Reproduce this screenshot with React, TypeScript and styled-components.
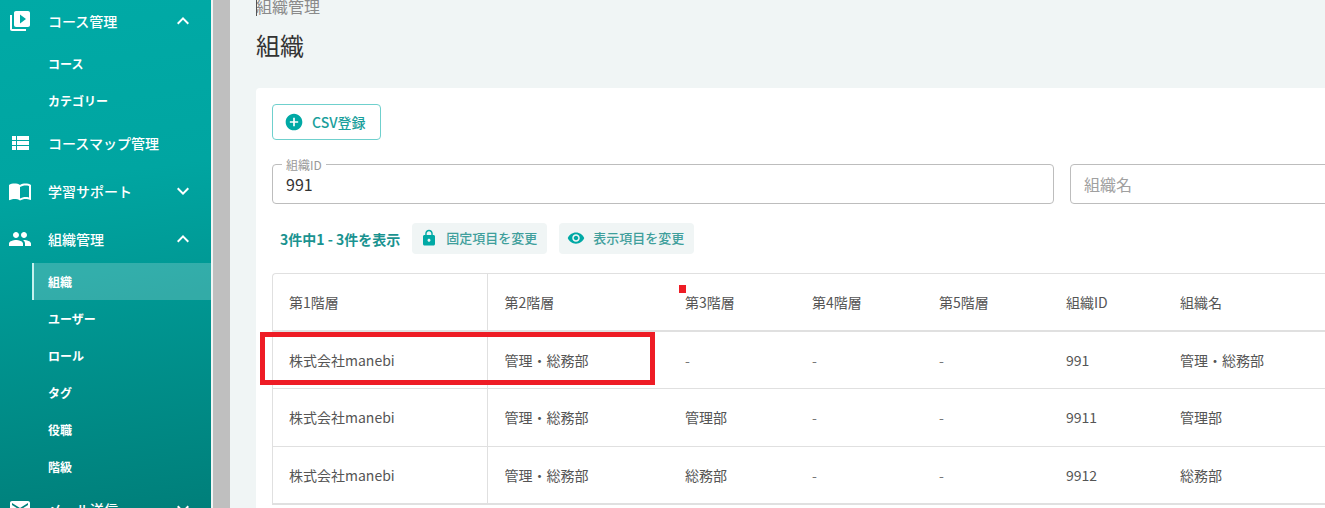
import React from 'react';
import styled, { createGlobalStyle } from 'styled-components';
import {
  MdAddCircle,
  MdEmail,
  MdExpandLess,
  MdExpandMore,
  MdImportContacts,
  MdLock,
  MdPeople,
  MdVisibility,
  MdVideoLibrary,
} from 'react-icons/md';

const GlobalStyle = createGlobalStyle`
  html, body {
    margin: 0;
    height: 100%;
    overflow: hidden;
  }
  body {
    font-family: "Noto Sans CJK JP", "Noto Sans", sans-serif;
    color: #333;
  }
`;

const Page = styled.div`
  display: flex;
  width: 1325px;
  height: 508px;
  overflow: hidden;
  background: #f0f5f5;
`;

const Sidebar = styled.nav`
  flex: 0 0 211px;
  height: 508px;
  overflow: hidden;
  background: linear-gradient(172deg, #00aaa6 0%, #00a5a1 35%, #007f7a 100%);
  color: #fff;
`;

const SideList = styled.div`
  margin-top: -3px;
  display: flex;
  flex-direction: column;
`;

const GroupRow = styled.div`
  flex: 0 0 48px;
  height: 48px;
  display: flex;
  align-items: center;
  padding: 0 20px 0 8px;
  font-size: 14px;
  font-weight: 500;
`;

const GroupIcon = styled.span`
  flex: 0 0 24px;
  width: 24px;
  height: 24px;
  font-size: 24px;
  display: flex;
  align-items: center;
  justify-content: center;
  margin-right: 16px;
`;

const GroupLabel = styled.span`
  flex: 1;
`;

const Chevron = styled.span`
  display: flex;
  font-size: 24px;
  margin-right: -4px;
`;

const SubRow = styled.div<{ $active?: boolean }>`
  height: 37px;
  margin-left: 32px;
  padding-left: ${(p) => (p.$active ? '14px' : '16px')};
  display: flex;
  align-items: center;
  font-size: 12px;
  font-weight: 700;
  box-sizing: border-box;
  border-left: ${(p) => (p.$active ? '2px solid #c6f1ee' : 'none')};
  background: ${(p) => (p.$active ? 'rgba(255, 255, 255, 0.2)' : 'transparent')};
`;

const Gutter = styled.div`
  flex: 0 0 17px;
  margin-left: 2px;
  background: #bfbfbf;
`;

const Main = styled.main`
  flex: 1;
  min-width: 0;
  position: relative;
  padding: 0 0 0 26px;
  overflow: hidden;
`;

const Crumb = styled.div`
  height: 14px;
  margin-top: -4px;
  font-size: 16px;
  line-height: 20px;
  color: #8a8a8a;
  width: 70px;
  position: relative;
`;

const Caret = styled.span`
  position: absolute;
  left: 0;
  top: 0;
  width: 1px;
  height: 20px;
  background: #555;
`;

const Title = styled.h1`
  margin: 17px 0 0;
  height: 61px;
  font-size: 24px;
  font-weight: 400;
  line-height: 36px;
  color: #333;
`;

const Card = styled.section`
  width: 1200px;
  padding: 16px;
  background: #fff;
  border-radius: 4px;
  box-sizing: border-box;
  height: 500px;
`;

const OutlineButton = styled.button`
  display: flex;
  align-items: center;
  gap: 8px;
  width: 109px;
  height: 36px;
  padding: 0 0 0 11px;
  background: #fff;
  border: 1px solid #6fd0cd;
  border-radius: 4px;
  box-sizing: border-box;
  color: #1a9f9c;
  font: 500 14px "Noto Sans CJK JP", sans-serif;
  svg {
    font-size: 20px;
    color: #00a9a5;
  }
`;

const Fields = styled.div`
  display: flex;
  gap: 16px;
  margin-top: 24px;
`;

const Field = styled.div<{ $width: number }>`
  position: relative;
  flex: 0 0 ${(p) => p.$width}px;
  height: 40px;
  box-sizing: border-box;
  padding: 0 13px;
  display: flex;
  align-items: center;
  border: 1px solid #bdbdbd;
  border-radius: 4px;
  font-size: 16px;
  color: #333;
`;

const FieldLegend = styled.span`
  position: absolute;
  left: 9px;
  top: -7px;
  padding: 0 4px;
  background: #fff;
  font-size: 12px;
  line-height: 13px;
  color: #9a9a9a;
`;

const Placeholder = styled.span`
  color: #a0a0a0;
  font-size: 16px;
`;

const Toolbar = styled.div`
  display: flex;
  align-items: center;
  margin-top: 19px;
  height: 31px;
`;

const ResultCount = styled.span`
  margin: 0 12px 0 8px;
  font-size: 14px;
  font-weight: 700;
  color: #1a9390;
`;

const SoftButton = styled.button`
  display: flex;
  align-items: center;
  gap: 7px;
  width: 135px;
  height: 31px;
  margin-right: 12px;
  padding: 0 0 2px 8px;
  border: none;
  border-radius: 4px;
  background: #f0f5f5;
  color: #3f9f9c;
  font: 500 13px "Noto Sans CJK JP", sans-serif;
  svg {
    font-size: 18px;
    color: #00a9a5;
    margin-right: 1px;
  }
`;

const TableBox = styled.div`
  margin-top: 19px;
  border: 1px solid #e0e0e0;
  border-right: none;
  border-radius: 4px 0 0 0;
`;

const Table = styled.table`
  border-collapse: collapse;
  table-layout: fixed;
  width: 1100px;
  font-size: 14px;
  color: #555;

  th:nth-child(2),
  td:nth-child(2) {
    padding-left: 17px;
  }
`;

const HeadCell = styled.th<{ $divider?: boolean }>`
  height: 57px;
  padding: 0 16px;
  text-align: left;
  font-weight: 400;
  box-sizing: border-box;
  border-bottom: 2px solid #e0e0e0;
  border-right: ${(p) => (p.$divider ? '1px solid #e0e0e0' : 'none')};
`;

const BodyCell = styled.td<{ $divider?: boolean; $muted?: boolean; $height: number }>`
  height: ${(p) => p.$height}px;
  padding: 0 16px;
  box-sizing: border-box;
  border-bottom: 1px solid #e0e0e0;
  border-right: ${(p) => (p.$divider ? '1px solid #e0e0e0' : 'none')};
  color: ${(p) => (p.$muted ? '#777' : '#555')};
`;

const RedFrame = styled.div`
  position: absolute;
  left: 30px;
  top: 332px;
  width: 395px;
  height: 53px;
  box-sizing: border-box;
  border: 5px solid #ee1c25;
  pointer-events: none;
`;

const RedDot = styled.div`
  position: absolute;
  left: 449px;
  top: 285px;
  width: 7px;
  height: 8px;
  background: #ee1c25;
`;

const ListIcon: React.FC = () => (
  <svg width="24" height="24" viewBox="0 0 24 24" fill="currentColor" aria-hidden="true">
    <path d="M4 14h4v-4H4v4zm0 5h4v-4H4v4zM4 9h4V5H4v4zm5 5h12v-4H9v4zm0 5h12v-4H9v4zM9 5v4h12V5H9z" />
  </svg>
);

const columns = [214, 182, 127, 127, 127, 114, 209];
const headers = ['第1階層', '第2階層', '第3階層', '第4階層', '第5階層', '組織ID', '組織名'];
const rowHeights = [57, 58, 57];
const rows = [
  ['株式会社manebi', '管理・総務部', '-', '-', '-', '991', '管理・総務部'],
  ['株式会社manebi', '管理・総務部', '管理部', '-', '-', '9911', '管理部'],
  ['株式会社manebi', '管理・総務部', '総務部', '-', '-', '9912', '総務部'],
];

const App: React.FC = () => {
  return (
    <>
      <GlobalStyle />
      <Page>
        <Sidebar>
          <SideList>
            <GroupRow>
              <GroupIcon><MdVideoLibrary /></GroupIcon>
              <GroupLabel>コース管理</GroupLabel>
              <Chevron><MdExpandLess /></Chevron>
            </GroupRow>
            <SubRow>コース</SubRow>
            <SubRow>カテゴリー</SubRow>
            <GroupRow>
              <GroupIcon><ListIcon /></GroupIcon>
              <GroupLabel>コースマップ管理</GroupLabel>
            </GroupRow>
            <GroupRow>
              <GroupIcon><MdImportContacts /></GroupIcon>
              <GroupLabel>学習サポート</GroupLabel>
              <Chevron><MdExpandMore /></Chevron>
            </GroupRow>
            <GroupRow>
              <GroupIcon><MdPeople /></GroupIcon>
              <GroupLabel>組織管理</GroupLabel>
              <Chevron><MdExpandLess /></Chevron>
            </GroupRow>
            <SubRow $active>組織</SubRow>
            <SubRow>ユーザー</SubRow>
            <SubRow>ロール</SubRow>
            <SubRow>タグ</SubRow>
            <SubRow>役職</SubRow>
            <SubRow>階級</SubRow>
            <GroupRow>
              <GroupIcon><MdEmail /></GroupIcon>
              <GroupLabel>メール送信</GroupLabel>
              <Chevron><MdExpandMore /></Chevron>
            </GroupRow>
          </SideList>
        </Sidebar>
        <Gutter />
        <Main>
          <Crumb><Caret />組織管理</Crumb>
          <Title>組織</Title>
          <Card>
            <OutlineButton>
              <MdAddCircle />
              CSV登録
            </OutlineButton>
            <Fields>
              <Field $width={782}>
                <FieldLegend>組織ID</FieldLegend>
                991
              </Field>
              <Field $width={300}>
                <Placeholder>組織名</Placeholder>
              </Field>
            </Fields>
            <Toolbar>
              <ResultCount>3件中1 - 3件を表示</ResultCount>
              <SoftButton>
                <MdLock />
                固定項目を変更
              </SoftButton>
              <SoftButton>
                <MdVisibility />
                表示項目を変更
              </SoftButton>
            </Toolbar>
            <TableBox>
              <Table>
                <colgroup>
                  {columns.map((w, i) => (
                    <col key={i} style={{ width: w }} />
                  ))}
                </colgroup>
                <thead>
                  <tr>
                    {headers.map((h, i) => (
                      <HeadCell key={h} $divider={i === 0}>{h}</HeadCell>
                    ))}
                  </tr>
                </thead>
                <tbody>
                  {rows.map((row, rowIndex) => (
                    <tr key={row[5]}>
                      {row.map((cell, i) => (
                        <BodyCell
                          key={i}
                          $divider={i === 0}
                          $muted={cell === '-'}
                          $height={rowHeights[rowIndex]}
                        >
                          {cell}
                        </BodyCell>
                      ))}
                    </tr>
                  ))}
                </tbody>
              </Table>
            </TableBox>
          </Card>
          <RedFrame />
          <RedDot />
        </Main>
      </Page>
    </>
  );
};

export default App;
